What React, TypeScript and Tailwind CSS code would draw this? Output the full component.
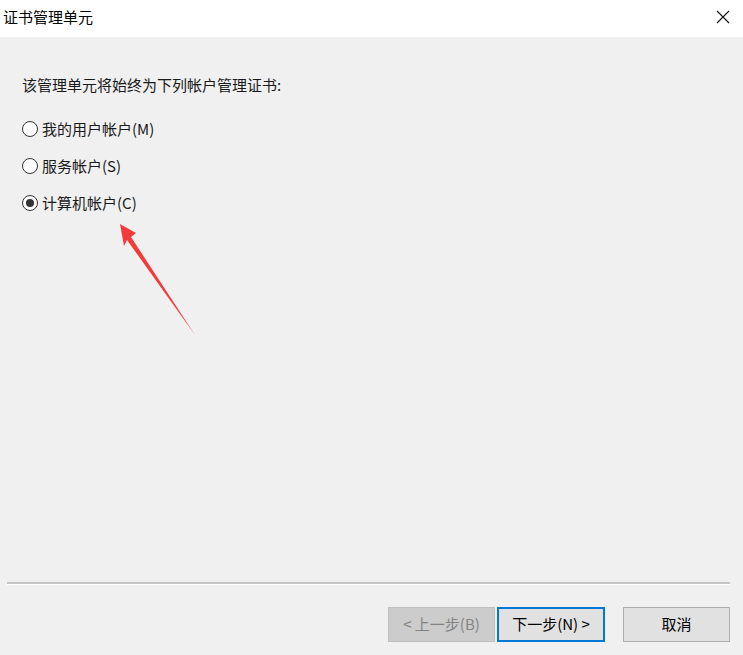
import React from 'react';

const font = { fontFamily: '"Noto Sans CJK SC", "Noto Sans", sans-serif' };

function Radio({ label, checked }: { label: string; checked?: boolean }) {
  return (
    <label className="flex items-center h-[20px] text-[15px] text-[#1a1a1a]">
      <span className="w-[16px] h-[16px] rounded-full border border-[#333] bg-white flex items-center justify-center mr-[4px]">
        {checked && <span className="w-[8px] h-[8px] rounded-full bg-[#333]" />}
      </span>
      {label}
    </label>
  );
}

export default function App() {
  return (
    <div className="relative w-[743px] h-[655px] flex flex-col bg-[#f0f0f0] overflow-hidden" style={font}>
      {/* Title bar */}
      <div className="h-[37px] bg-white flex items-center justify-between pl-[3px] pr-[10px] shrink-0">
        <span className="text-[15px] text-black -mt-[3px]">证书管理单元</span>
        <svg width="14" height="14" viewBox="0 0 14 14" className="mr-[3px] -mt-[3px]">
          <path d="M1 1 L13 13 M13 1 L1 13" stroke="#111" strokeWidth="1.1" />
        </svg>
      </div>

      {/* Content */}
      <div className="flex-1 flex flex-col pl-[22px] pt-[38px]">
        <p className="text-[15px] text-[#1a1a1a] leading-[20px]">该管理单元将始终为下列帐户管理证书:</p>
        <div className="flex flex-col gap-[17px] mt-[24px]">
          <Radio label="我的用户帐户(M)" />
          <Radio label="服务帐户(S)" />
          <Radio label="计算机帐户(C)" checked />
        </div>
      </div>

      {/* Separator */}
      <div className="ml-[7px] mr-[13px] shrink-0">
        <div className="h-[2px] bg-[#c4c4c4]" />
        <div className="h-[1px] bg-white" />
      </div>

      {/* Buttons */}
      <div className="h-[70px] flex items-start justify-end pr-[13px] pt-[22px] shrink-0">
        <button className="w-[107px] h-[35px] bg-[#cccccc] border border-[#bfbfbf] text-[15px] text-[#838383]">
          &lt; 上一步(B)
        </button>
        <button className="w-[108px] h-[35px] ml-[2px] bg-[#e1e1e1] border-2 border-[#0078d7] text-[15px] text-black">
          下一步(N) &gt;
        </button>
        <button className="w-[107px] h-[35px] ml-[18px] bg-[#e1e1e1] border border-[#adadad] text-[15px] text-black">
          取消
        </button>
      </div>

      {/* Red annotation arrow */}
      <svg className="absolute left-0 top-0 pointer-events-none" width="743" height="655">
        <polygon
          points="120,224 136,233 131,237 195,335 127,240 124,246"
          fill="#f43b3b"
        />
      </svg>
    </div>
  );
}
